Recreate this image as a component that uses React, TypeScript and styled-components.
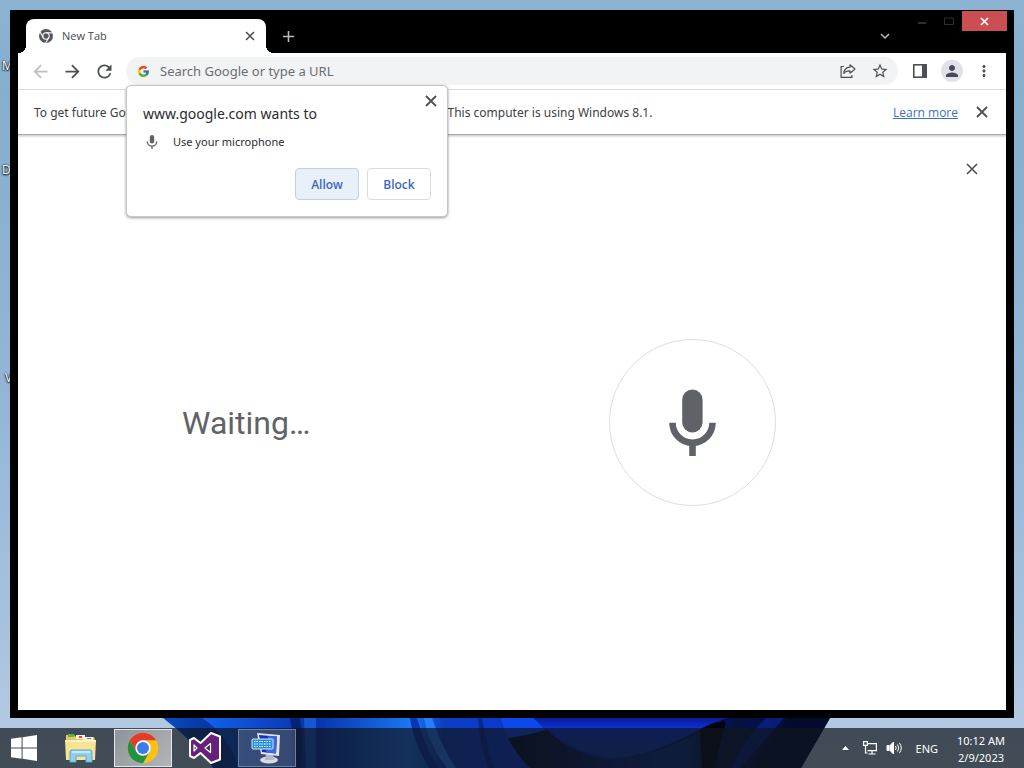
import React from "react";
import styled, { createGlobalStyle, css } from "styled-components";
import {
  MdArrowBack,
  MdArrowForward,
  MdRefresh,
  MdStarBorder,
  MdMoreVert,
  MdPerson,
  MdExpandMore,
  MdAdd,
} from "react-icons/md";
import { FcGoogle } from "react-icons/fc";

const GlobalStyle = createGlobalStyle`
  * { box-sizing: border-box; }
  body {
    margin: 0;
    font-family: "Open Sans", "Noto Sans", sans-serif;
    font-size: 12px;
    color: #3c4043;
  }
  button, input { font-family: inherit; }
`;

const uiFont = `"Noto Sans", "Open Sans", sans-serif`;

const Desktop = styled.div`
  position: relative;
  display: flex;
  flex-direction: column;
  min-height: 100vh;
  overflow: hidden;
  background: linear-gradient(180deg, #8cb3d1 0%, #86aecd 12%, #92b5d6 50%, #a6c1de 80%, #b7cce2 100%);
`;

const Wallpaper = styled.svg`
  position: absolute;
  left: 0;
  bottom: 0;
  width: 100%;
  height: 50px;
`;

const DesktopLabel = styled.span<{ $top: number; $left: number }>`
  position: absolute;
  top: ${(p) => p.$top}px;
  left: ${(p) => p.$left}px;
  color: #fff;
  font-size: 12px;
  line-height: 16px;
  text-shadow: 0 1px 2px #000, 0 0 2px #000;
`;

const BrowserWindow = styled.div`
  position: relative;
  flex: 1;
  display: flex;
  flex-direction: column;
  margin: 10px;
  padding: 0 8px 8px;
  background: #000;
`;

const TitleBar = styled.header`
  display: flex;
  align-items: flex-end;
  height: 43px;
  margin-right: -1px;
  padding-left: 8px;
`;

const Tab = styled.div`
  position: relative;
  display: flex;
  align-items: center;
  width: 240px;
  height: 34px;
  padding: 0 6px 0 13px;
  gap: 9px;
  border-radius: 8px 8px 0 0;
  background: #fff;
  color: #45494d;

  &::before,
  &::after {
    content: "";
    position: absolute;
    bottom: 0;
    width: 8px;
    height: 8px;
  }
  &::before {
    left: -8px;
    background: radial-gradient(circle at 0 0, #000 8px, #fff 8px);
  }
  &::after {
    right: -8px;
    background: radial-gradient(circle at 100% 0, #000 8px, #fff 8px);
  }
`;

const TabTitle = styled.span`
  flex: 1;
  font-size: 11px;
  line-height: 16px;
`;

const IconButton = styled.button<{ $size?: number; $color?: string }>`
  display: flex;
  align-items: center;
  justify-content: center;
  flex: none;
  width: ${(p) => p.$size ?? 28}px;
  height: ${(p) => p.$size ?? 28}px;
  padding: 0;
  border: 0;
  border-radius: 50%;
  background: none;
  color: ${(p) => p.$color ?? "#4c5054"};
`;

const TabStripButton = styled(IconButton)<{ $push?: boolean }>`
  height: 34px;
  ${(p) =>
    p.$push
      ? css`
          margin-left: auto;
          margin-right: 9px;
        `
      : css`
          margin-left: 8px;
        `}
`;

const CaptionButtons = styled.div`
  display: flex;
  align-self: flex-start;
  padding-top: 1px;
`;

const CaptionButton = styled.button<{ $close?: boolean }>`
  display: flex;
  align-items: center;
  justify-content: center;
  width: ${(p) => (p.$close ? 45 : 27)}px;
  height: 20px;
  padding: 0;
  border: 0;
  background: ${(p) => (p.$close ? "#c94f52" : "none")};
  color: ${(p) => (p.$close ? "#fff" : "#2e2e2e")};
`;

const Toolbar = styled.div`
  display: flex;
  align-items: center;
  gap: 4px;
  height: 37px;
  padding: 0 8px;
  border-bottom: 1px solid #d9dbdd;
  background: #fff;
`;

const Omnibox = styled.div`
  position: relative;
  display: flex;
  align-items: center;
  flex: 1;
  gap: 4px;
  height: 28px;
  margin: 0 4px;
  padding: 0 4px 0 11px;
  border-radius: 14px;
  background: #f1f3f4;
`;

const SearchInput = styled.input`
  flex: 1;
  min-width: 0;
  height: 28px;
  padding: 0 0 0 6px;
  border: 0;
  outline: 0;
  background: none;
  font-family: ${uiFont};
  font-size: 13px;

  &::placeholder {
    color: #6a6e73;
    opacity: 1;
  }
`;

const Avatar = styled.button`
  display: flex;
  align-items: center;
  justify-content: center;
  width: 22px;
  height: 22px;
  margin: 0 3px;
  padding: 0;
  border: 0;
  border-radius: 50%;
  background: #dfe1e8;
  color: #47495a;
`;

const Popup = styled.section`
  position: absolute;
  z-index: 2;
  top: 28px;
  left: 0;
  width: 322px;
  padding: 16px;
  border: 1px solid #c4c6c9;
  border-radius: 5px;
  background: #fff;
  box-shadow: 0 1px 3px rgba(0, 0, 0, 0.4);
  color: #2a2c2f;
`;

const PopupClose = styled(IconButton)`
  position: absolute;
  top: 7px;
  right: 8px;
`;

const PopupTitle = styled.h1`
  margin: 0;
  font-family: ${uiFont};
  font-size: 14px;
  line-height: 24px;
  font-weight: 400;
`;

const Permission = styled.div`
  display: flex;
  align-items: center;
  gap: 13px;
  margin-top: 6px;
  padding-left: 1px;
  font-family: ${uiFont};
  font-size: 11px;
  line-height: 20px;
`;

const PopupActions = styled.div`
  display: flex;
  justify-content: flex-end;
  gap: 8px;
  margin-top: 16px;
`;

const ActionButton = styled.button<{ $active?: boolean }>`
  width: 64px;
  height: 32px;
  padding: 0;
  border: 1px solid ${(p) => (p.$active ? "#c5d0de" : "#dadce0")};
  border-radius: 4px;
  background: ${(p) => (p.$active ? "#e8f0fa" : "#fff")};
  color: #3d68bd;
  font-size: 12px;
  font-weight: 600;
`;

const InfoBar = styled.div`
  display: flex;
  align-items: center;
  height: 44px;
  padding: 0 10px 0 16px;
  background: #fff;
  white-space: nowrap;
`;

const InfoText = styled.p`
  display: flex;
  flex: 1;
  gap: 16px;
  margin: 0;
  font-family: ${uiFont};
`;

const InfoLink = styled.a`
  margin-right: 10px;
  color: #3a6fc4;
`;

const Page = styled.main`
  flex: 1;
  display: grid;
  grid-template-columns: 164fr 427fr 167px 230fr;
  align-items: center;
  border-top: 1px solid #a8a8a8;
  background: linear-gradient(180deg, #cfcfcf 0, #fff 3px);
`;

const PageClose = styled(IconButton)`
  grid-area: 1 / 4;
  align-self: start;
  justify-self: end;
  margin: 20px;
`;

const Status = styled.p`
  grid-area: 1 / 2;
  margin: 0;
  color: #5f6368;
  font-family: Roboto, sans-serif;
  font-size: 32px;
  line-height: 40px;
`;

const MicButton = styled.button`
  grid-area: 1 / 3;
  display: flex;
  align-items: center;
  justify-content: center;
  width: 167px;
  height: 167px;
  padding: 0;
  border: 1px solid #dedede;
  border-radius: 50%;
  background: #fff;
  color: #5f6368;
`;

const TaskBar = styled.footer`
  position: relative;
  display: flex;
  align-items: center;
  gap: 4px;
  height: 40px;
  padding-right: 19px;
  background: rgba(16, 22, 28, 0.7);
  color: #fff;
`;

const TaskButton = styled.button<{ $state?: "active" | "open"; $width?: number }>`
  display: flex;
  align-items: center;
  justify-content: center;
  width: ${(p) => p.$width ?? 58}px;
  height: 38px;
  padding: 0;
  border: 1px solid
    ${(p) => (p.$state === "active" ? "#e4e6e8" : p.$state === "open" ? "#6c7f9c" : "transparent")};
  background: ${(p) =>
    p.$state === "active"
      ? "linear-gradient(135deg, #8d9499, #b2b6b9)"
      : p.$state === "open"
        ? "rgba(150, 170, 210, 0.3)"
        : "none"};
`;

const Tray = styled.div`
  display: flex;
  align-items: center;
  margin-left: auto;
  gap: 8px;
  font-family: ${uiFont};
  font-size: 11px;
`;

const TrayButton = styled.button`
  display: flex;
  align-items: center;
  justify-content: center;
  width: 16px;
  height: 20px;
  padding: 0;
  border: 0;
  background: none;
`;

const Language = styled.span`
  margin: 0 11px 0 6px;
`;

const Clock = styled.time`
  padding-top: 1px;
  line-height: 17px;
  text-align: center;
`;

function CloseIcon({ size, weight }: { size: number; weight: number }) {
  return (
    <svg width={size} height={size} viewBox={`0 0 ${size} ${size}`} stroke="currentColor" strokeWidth={weight} aria-hidden>
      <path d={`M1 1 ${size - 1} ${size - 1}M${size - 1} 1 1 ${size - 1}`} />
    </svg>
  );
}

function MicIcon({ width, height }: { width: number; height: number }) {
  return (
    <svg width={width} height={height} viewBox="0 0 47 67" fill="currentColor" aria-hidden>
      <rect x="13.2" y="0.5" width="20.4" height="43" rx="10.2" />
      <path d="M3.5 33.8a20 20 0 0 0 40 0" fill="none" stroke="currentColor" strokeWidth="6.6" />
      <rect x="20.2" y="55.5" width="6.6" height="11.5" />
    </svg>
  );
}

function ShareIcon() {
  return (
    <svg width="16" height="16" viewBox="0 0 16 16" fill="none" stroke="currentColor" strokeWidth="1.2" aria-hidden>
      <path d="M4 3.5H1.1v10.9h10.8v-2.5" />
      <path d="M10 1.8 15 6l-5 4.2V7.8C7 7.8 5 8.5 3.8 10.5 4 7 6 4.5 10 4.2z" strokeLinejoin="round" />
    </svg>
  );
}

function SidePanelIcon() {
  return (
    <svg width="14" height="14" viewBox="0 0 14 14" aria-hidden>
      <rect x="0.8" y="0.8" width="12.4" height="12.4" fill="none" stroke="currentColor" strokeWidth="1.6" />
      <rect x="9" y="0" width="5" height="14" fill="currentColor" />
    </svg>
  );
}

function TabChromeIcon() {
  return (
    <svg width="14" height="14" viewBox="0 0 24 24" aria-hidden>
      <circle cx="12" cy="12" r="12" fill="#55595e" />
      <g fill="none" stroke="#fff" strokeWidth="1.8">
        <circle cx="12" cy="12" r="5.5" />
        <path d="M12 6.5H24" />
        <path d="M12 6.5H24" transform="rotate(120 12 12)" />
        <path d="M12 6.5H24" transform="rotate(240 12 12)" />
      </g>
    </svg>
  );
}

function Bloom() {
  return (
    <Wallpaper viewBox="0 0 1024 50" preserveAspectRatio="none" aria-hidden>
      <defs>
        <linearGradient id="base">
          <stop offset="0" stopColor="#0a4cc4" />
          <stop offset="0.06" stopColor="#0838a4" />
          <stop offset="0.24" stopColor="#0838b0" />
          <stop offset="0.37" stopColor="#1a76f2" />
          <stop offset="0.42" stopColor="#0c3fc4" />
          <stop offset="0.55" stopColor="#0a37d0" />
          <stop offset="0.8" stopColor="#05155c" />
          <stop offset="1" stopColor="#030a28" />
        </linearGradient>
        <linearGradient id="petal">
          <stop offset="0" stopColor="#1262ee" />
          <stop offset="1" stopColor="#0a3ab8" />
        </linearGradient>
        <linearGradient id="bowl" x2="0" y2="1">
          <stop offset="0" stopColor="#081c94" />
          <stop offset="0.25" stopColor="#0c32d4" />
          <stop offset="1" stopColor="#123a9c" />
        </linearGradient>
        <linearGradient id="under">
          <stop offset="0" stopColor="#020820" />
          <stop offset="0.5" stopColor="#0a2270" />
          <stop offset="0.8" stopColor="#0a2f86" />
          <stop offset="1" stopColor="#01040f" />
        </linearGradient>
      </defs>
      <path d="M163 0H830L801 50H213Q195 24 163 0z" fill="url(#base)" />
      <path d="M202 0H290q5 26 2 50h-54Q230 18 202 0z" fill="url(#petal)" />
      <path d="M290 0h10q4 28 0 50h-8q3-26-2-50z" fill="#052277" />
      <path d="M304 0h12v50h-10z" fill="#1558d2" />
      <path d="M410 0h7q8 30 22 50h-10q-16-26-19-50z" fill="#0a35b4" />
      <path d="M424 0h8q10 30 24 50h-9Q428 26 424 0z" fill="#2a7cff" />
      <path d="M478 0h4q6 34 12 50h-6q-8-24-10-50z" fill="#062a90" />
      <path d="M500 0h34q40 42 85 42Q660 36 716 6q6-2 14-6h-8q-6 30-4 50H530Q508 28 500 0z" fill="url(#under)" />
      <path d="M500 0h34l12 12q-22 6-38 8Q503 10 500 0z" fill="#0c48ea" />
      <path d="M533 0h197q-10 2-24 8-54 30-90 32Q576 38 533 0z" fill="url(#bowl)" />
      <path d="M700 12q14-10 26-8l-12 46h-12z" fill="#010410" />
      <path d="M734 0h14L728 50h-10z" fill="#05123e" />
      <path d="M766 0h18L740 50h-8q12-30 34-50z" fill="#0a2a9c" opacity="0.6" />
      <path d="M788 0h42l-29 50h-50z" fill="#030b2c" />
    </Wallpaper>
  );
}

function WindowsLogo() {
  return (
    <svg width="26" height="26" viewBox="0 0 26 26" fill="#fff" aria-hidden>
      <path d="M0 3.8 10.6 2.3V12.5H0zM11.6 2.2 26 0V12.5H11.6zM0 13.5h10.6v10.2L0 22.2zM11.6 13.5H26V26L11.6 23.8z" />
    </svg>
  );
}

function ExplorerIcon() {
  return (
    <svg width="34" height="32" viewBox="0 0 34 32" aria-hidden>
      <path d="M2 3h8l2 2h18l1 3v18H2z" fill="#e8c860" />
      <path d="M4 2h6v3H4z" fill="#5fae4d" />
      <path d="M12 3h9v4h-9z" fill="#f5f3e8" />
      <path d="M15 4h3v2h-3z" fill="#d0503c" />
      <path d="M20 5h9v3h-9z" fill="#f5f3e8" />
      <path d="M23 6h4v1h-4z" fill="#4b86c8" />
      <path d="M1 8h31l-1 20H2z" fill="#f7e394" />
      <path d="M1 8h31v2H1z" fill="#fff3bd" />
      <path d="M6 30V20q0-2 2-2h18q2 0 2 2v10h-6v-6H12v6z" fill="#8fd0ee" stroke="#5aa6cf" />
      <path d="M8 20h18" stroke="#d8f3ff" strokeWidth="1.5" />
    </svg>
  );
}

function ChromeIcon() {
  return (
    <svg width="32" height="32" viewBox="0 0 48 48" aria-hidden>
      <circle cx="24" cy="24" r="23" fill="#fbc116" />
      <path d="M4.1 12.5A23 23 0 0 0 24 47l9.96-17.25L24 24 14.04 29.75z" fill="#229342" />
      <path d="M4.1 12.5A23 23 0 0 1 43.9 12.5H24L14.04 29.75z" fill="#e33b2e" />
      <circle cx="24" cy="24" r="11.5" fill="#fff" />
      <circle cx="24" cy="24" r="9" fill="#3b7de8" />
    </svg>
  );
}

function VisualStudioIcon() {
  return (
    <svg width="34" height="34" viewBox="0 0 34 34" aria-hidden>
      <path
        d="M23 2 32 5.5V28.5L23 32 12.5 22 6 27 2 25V9L6 7 12.5 12z"
        fill="#68217a"
        stroke="#fff"
        strokeWidth="2"
        strokeLinejoin="round"
      />
      <path d="M22.5 12.5 17 17l5.5 4.5zM6 14v6l3-3z" fill="#2b3448" stroke="#fff" strokeWidth="1.2" strokeLinejoin="round" />
    </svg>
  );
}

function RemoteKeyboardIcon() {
  return (
    <svg width="32" height="32" viewBox="0 0 32 32" aria-hidden>
      <ellipse cx="18" cy="28" rx="9" ry="3.5" fill="#d9dde2" />
      <path d="M15 22h7l1 6h-9z" fill="#b4bac2" />
      <path d="M6 1 29 3 28 24 10 22z" fill="#dfe3e8" />
      <path d="M8 3 26 4.5 25 21.5 11 20z" fill="#1930b4" />
      <path d="M17 4 26 4.5 25 21.5 15 20.5z" fill="#3f66dc" />
      <rect x="1" y="7" width="21" height="10" rx="1" fill="#2491dc" stroke="#cfe8fa" />
      <path d="M3 9.5h17M3 12h17M3 14.5h17" stroke="#fff" strokeWidth="1.2" strokeDasharray="1.5 1" />
    </svg>
  );
}

function NetworkIcon() {
  return (
    <svg width="16" height="16" viewBox="0 0 16 16" fill="none" stroke="#fff" strokeWidth="1.2" aria-hidden>
      <path d="M6 3.6h8.4v7H5.5M10 10.6V14M6.5 14h7" />
      <path d="M1.6 1.6h3.8v3.8H1.6zM3.5 5.4v7.6h2" />
    </svg>
  );
}

function SpeakerIcon() {
  return (
    <svg width="16" height="16" viewBox="0 0 16 16" fill="none" stroke="#fff" aria-hidden>
      <path d="M1 5.5h2v5H1zM4 5.5 7.5 2v12L4 10.5z" fill="#fff" />
      <path d="M9.5 6q1.4 2 0 4M11.5 4.5q2.6 3.5 0 7M13.5 3q3.6 5 0 10" />
    </svg>
  );
}

export default function App() {
  return (
    <Desktop>
      <GlobalStyle />
      <Bloom />
      <DesktopLabel $top={58} $left={2}>M</DesktopLabel>
      <DesktopLabel $top={162} $left={2}>D</DesktopLabel>
      <DesktopLabel $top={370} $left={5}>V</DesktopLabel>

      <BrowserWindow>
        <TitleBar>
          <Tab>
            <TabChromeIcon />
            <TabTitle>New Tab</TabTitle>
            <IconButton $size={20} aria-label="Close tab">
              <CloseIcon size={10} weight={1.6} />
            </IconButton>
          </Tab>
          <TabStripButton $color="#b9bcbf" aria-label="New tab">
            <MdAdd size={19} />
          </TabStripButton>
          <TabStripButton $push $color="#b9bcbf" aria-label="Search tabs">
            <MdExpandMore size={18} />
          </TabStripButton>
          <CaptionButtons>
            <CaptionButton aria-label="Minimize">
              <svg width="8" height="10" viewBox="0 0 8 10"><path d="M0 7h8" stroke="currentColor" strokeWidth="2" /></svg>
            </CaptionButton>
            <CaptionButton aria-label="Maximize">
              <svg width="10" height="8" viewBox="0 0 10 8"><path d="M.5 1h9v6.5h-9z" fill="none" stroke="currentColor" /></svg>
            </CaptionButton>
            <CaptionButton $close aria-label="Close window">
              <CloseIcon size={9} weight={1.7} />
            </CaptionButton>
          </CaptionButtons>
        </TitleBar>

        <Toolbar>
          <IconButton $color="#bcbec1" aria-label="Back"><MdArrowBack size={21} /></IconButton>
          <IconButton aria-label="Forward"><MdArrowForward size={21} /></IconButton>
          <IconButton aria-label="Reload"><MdRefresh size={21} /></IconButton>
          <Omnibox>
            <FcGoogle size={13} />
            <SearchInput aria-label="Address and search bar" placeholder="Search Google or type a URL" />
            <IconButton aria-label="Share this page"><ShareIcon /></IconButton>
            <IconButton aria-label="Bookmark this tab"><MdStarBorder size={18} /></IconButton>
            <Popup aria-label="Permission request">
              <PopupClose $size={16} aria-label="Close"><CloseIcon size={12} weight={1.8} /></PopupClose>
              <PopupTitle>www.google.com wants to</PopupTitle>
              <Permission>
                <svg width="16" height="16" viewBox="0 0 16 16" fill="#5f6368" aria-hidden>
                  <rect x="5.8" y="1" width="4.4" height="8.5" rx="2.2" />
                  <path d="M3.3 7.5a4.7 4.7 0 0 0 9.4 0M8 12v3" fill="none" stroke="#5f6368" strokeWidth="1.3" />
                </svg>
                <span>Use your microphone</span>
              </Permission>
              <PopupActions>
                <ActionButton $active>Allow</ActionButton>
                <ActionButton>Block</ActionButton>
              </PopupActions>
            </Popup>
          </Omnibox>
          <IconButton aria-label="Side panel"><SidePanelIcon /></IconButton>
          <Avatar aria-label="Profile"><MdPerson size={18} /></Avatar>
          <IconButton aria-label="Menu"><MdMoreVert size={18} /></IconButton>
        </Toolbar>

        <InfoBar>
          <InfoText>
            <span>To get future Google Chrome updates, you'll need Windows 10 or later.</span>
            <span>This computer is using Windows 8.1.</span>
          </InfoText>
          <InfoLink href="#learn-more">Learn more</InfoLink>
          <IconButton aria-label="Dismiss"><CloseIcon size={12} weight={1.8} /></IconButton>
        </InfoBar>

        <Page>
          <Status>Waiting…</Status>
          <MicButton aria-label="Speak"><MicIcon width={47} height={67} /></MicButton>
          <PageClose aria-label="Close voice search"><CloseIcon size={12} weight={1.6} /></PageClose>
        </Page>
      </BrowserWindow>

      <TaskBar>
        <TaskButton $width={48} aria-label="Start"><WindowsLogo /></TaskButton>
        <TaskButton aria-label="File Explorer"><ExplorerIcon /></TaskButton>
        <TaskButton $state="active" aria-label="Google Chrome"><ChromeIcon /></TaskButton>
        <TaskButton aria-label="Visual Studio"><VisualStudioIcon /></TaskButton>
        <TaskButton $state="open" aria-label="On-screen keyboard"><RemoteKeyboardIcon /></TaskButton>
        <Tray>
          <TrayButton aria-label="Show hidden icons">
            <svg width="7" height="4" viewBox="0 0 7 4"><path d="M3.5 0 7 4H0z" fill="#fff" /></svg>
          </TrayButton>
          <TrayButton aria-label="Network"><NetworkIcon /></TrayButton>
          <TrayButton aria-label="Volume"><SpeakerIcon /></TrayButton>
          <Language>ENG</Language>
          <Clock dateTime="2023-02-09T10:12">
            10:12 AM
            <br />
            2/9/2023
          </Clock>
        </Tray>
      </TaskBar>
    </Desktop>
  );
}
